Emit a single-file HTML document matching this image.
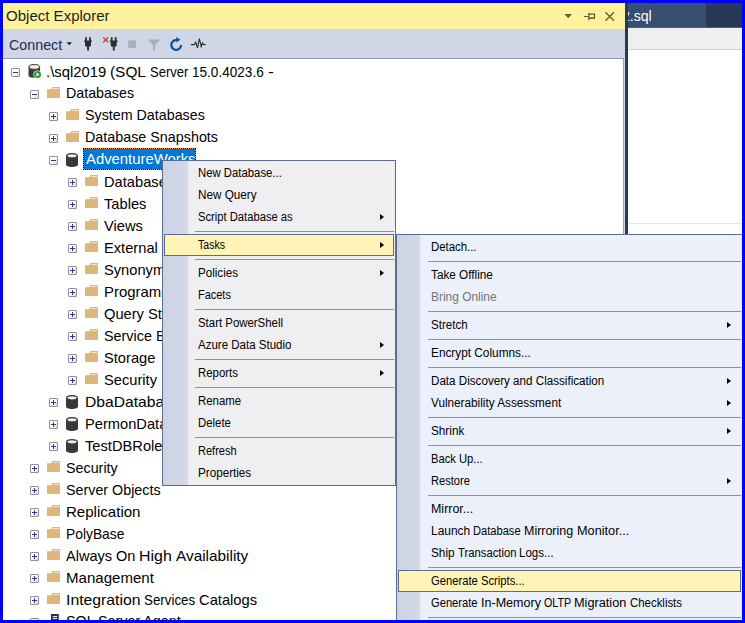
<!DOCTYPE html>
<html><head><meta charset="utf-8"><title>Object Explorer</title>
<style>
html,body{margin:0;padding:0}
body{width:745px;height:623px;position:relative;overflow:hidden;background:#fff;font-family:"Liberation Sans", sans-serif;}
#frame{position:absolute;left:0;top:0;width:739px;height:617px;border:3px solid #0000fe;z-index:50;pointer-events:none}
.abs{position:absolute}
.t{display:inline-block;transform-origin:0 50%;white-space:nowrap}
.tt{position:absolute;white-space:nowrap;line-height:22px;height:22px;font-size:15px;color:#000}
.ic{position:absolute;display:block}
.ex{position:absolute;width:7px;height:7px;border:1px solid #919191;background:linear-gradient(135deg,#fff 40%,#dcdcdc);border-radius:1px}
.ex .h{position:absolute;left:1px;top:3px;width:5px;height:1px;background:#27379a}
.ex .v{position:absolute;left:3px;top:1px;width:1px;height:5px;background:#27379a}
.menu{position:absolute;box-sizing:border-box;border:1px solid #5d6b8c;font-size:12px;color:#000}
.menu .gut{position:absolute;left:0;top:0;bottom:0;background:linear-gradient(90deg,#ccd3e4,#d3d9e8)}
.mi{position:absolute;left:0;right:0;height:22px;line-height:21.5px;white-space:nowrap}
.mi .t{position:absolute;top:1px}
.hl{position:absolute;box-sizing:border-box;top:0.2px;height:21.4px;border:1px solid #5a6a90;background:#fff3b5}
.sep{position:absolute;height:1px;background:#8490ad}
.arr{position:absolute;width:0;height:0;border-left:4.6px solid #000;border-top:3.8px solid transparent;border-bottom:3.8px solid transparent;top:7.8px}
.dis{color:#747474}
</style></head><body>

<div class="abs" style="left:3px;top:3px;width:621.5px;height:26px;background:#fff29d"></div>
<div class="tt" style="left:5.5px;top:5.2px;font-size:15.5px;color:#1e1e1e"><span class="t" id="title" style="transform:scaleX(0.9698)">Object Explorer</span></div>
<svg class="abs" style="left:560px;top:8px" width="62" height="16" viewBox="0 0 62 16">
<path d="M4.5 6h7.4l-3.7 4.2z" fill="#6a5a30"/>
<g stroke="#6a5a30" stroke-width="1.2" fill="none"><path d="M24 8.5h4.8M28.8 4.8v7.4M28.8 6.1h5.7v3.6"/></g><rect x="28.8" y="9.2" width="6.3" height="1.6" fill="#6a5a30"/>
<g stroke="#6a5a30" stroke-width="1.4" fill="none"><path d="M45.5 4.3l8.4 8.4M53.9 4.3l-8.4 8.4"/></g>
</svg>
<div class="abs" style="left:3px;top:29px;width:621.5px;height:29px;background:#cfd6e5"></div>
<div class="tt" style="left:8.5px;top:33.6px;color:#1b2a57"><span class="t" id="connect" style="transform:scaleX(0.9521)">Connect</span></div>
<svg class="abs" style="left:60px;top:32px" width="150" height="24" viewBox="0 0 150 24">
<path d="M6.6 10.2h5.4l-2.7 3z" fill="#1e1e1e"/>
<g fill="#2d2d2d"><rect x="25.1" y="5.2" width="1.8" height="4"/><rect x="29.1" y="5.2" width="1.8" height="4"/><path d="M24 8.5h8v1.2h-1v4l-1.2 1h-3.6l-1.2-1v-4h-1z"/><rect x="27.1" y="14.5" width="1.9" height="4"/></g>
<g fill="#2d2d2d" transform="translate(25.7,0)"><rect x="25.1" y="5.2" width="1.8" height="4"/><rect x="29.1" y="5.2" width="1.8" height="4"/><path d="M24 8.5h8v1.2h-1v4l-1.2 1h-3.6l-1.2-1v-4h-1z"/><rect x="27.1" y="14.5" width="1.9" height="4"/></g>
<path d="M43.2 5.4l5 5M48.2 5.4l-5 5" stroke="#c8321e" stroke-width="1.3" fill="none"/>
<rect x="68.2" y="8.3" width="7.8" height="7.6" fill="#a9aebb"/>
<path d="M87.8 7.4h12.4l-5 5.6v5.3h-2.3v-5.3z" fill="#a9aebb"/>
<path d="M116.6 8.1a4.9 4.9 0 1 0 4.5 4.9" stroke="#00539c" stroke-width="2.2" fill="none"/><path d="M116.2 5l4.3 2.7-4.3 2.5z" fill="#00539c"/>
<path d="M131 12.6h3.4l1.3-2.4 1.8 5.8 1.9-9.4 1.8 8 1.2-3.6 1.2 1.6h2" stroke="#2d2d2d" stroke-width="1.1" fill="none"/>
</svg>
<div class="abs" style="left:3px;top:58px;width:621px;height:1px;background:#8e9bbc"></div>
<div class="abs" style="left:623px;top:58px;width:1px;height:565px;background:#9aa3b8"></div>
<div class="abs" style="left:624px;top:29px;width:0.5px;height:594px;background:#cfd6e5"></div>
<div class="abs" style="left:624.5px;top:3px;width:3.5px;height:620px;background:#293955"></div>
<div class="abs" style="left:628px;top:3px;width:117px;height:25px;background:#293955"></div>
<div class="abs" style="left:628px;top:3px;width:78px;height:24px;background:#364e6f;overflow:hidden"><div class="tt" style="left:-5.8px;top:1.7px;color:#fff"><span class="t" id="tab" style="transform:scaleX(0.9389)">2.sql</span></div></div>
<div class="abs" style="left:628px;top:26.5px;width:117px;height:1.7px;background:#4d6082"></div>
<div class="abs" style="left:628px;top:28.2px;width:117px;height:21px;background:#efeff0"></div>
<div class="abs" style="left:628px;top:49px;width:117px;height:1px;background:#d0d0d6"></div>
<div class="abs" style="left:629px;top:222.5px;width:113px;height:1px;background:#e4e4ec"></div>
<div class="ex" style="left:11px;top:67.5px"><i class="h"></i></div>
<div class="abs" style="left:28px;top:63.5px"><svg class="ic" width="15" height="15" viewBox="0 0 15 15"><path d="M0.5 2.6v8.9c0 1.3 2.6 2.3 5.8 2.3s5.8-1 5.8-2.3v-8.9z" fill="#3a3a3a"/><ellipse cx="6.3" cy="2.9" rx="5.3" ry="2.4" fill="#ececec" stroke="#3a3a3a" stroke-width="1"/><circle cx="9.5" cy="10.5" r="4.1" fill="#fff"/><circle cx="9.5" cy="10.5" r="3.5" fill="#259a25"/><path d="M8.4 8.5l3.2 2-3.2 2z" fill="#fff"/></svg></div>
<div class="tt" style="left:0;top:61.0px"><span class="t" id="tr0_w0" style="white-space:pre;position:absolute;left:46.0px;transform:scaleX(0.9901)">.\sql2019 </span><span class="t" id="tr0_w1" style="white-space:pre;position:absolute;left:110.4px;transform:scaleX(1.0252)">(SQL </span><span class="t" id="tr0_w2" style="white-space:pre;position:absolute;left:150.0px;transform:scaleX(0.8685)">Server </span><span class="t" id="tr0_w3" style="white-space:pre;position:absolute;left:192.0px;transform:scaleX(0.9050)">15.0.4023.6 </span><span class="t" id="tr0_w4" style="white-space:pre;position:absolute;left:267.5px;transform:scaleX(1.1600)">-</span></div>
<div class="ex" style="left:30px;top:89.5px"><i class="h"></i></div>
<div class="abs" style="left:47px;top:86.8px"><svg class="ic" width="13" height="11" viewBox="0 0 13 11"><path d="M0 2.2h4.2l1.2-2.2h7.6v11h-13z" fill="#dcb67a"/><path d="M6.2 1h6v1.1h-6.4z" fill="#f3e4c8"/></svg></div>
<div class="tt" style="left:66.4px;top:82.3px"><span class="t" id="tr1" style="transform:scaleX(0.9481)">Databases</span></div>
<div class="ex" style="left:49px;top:111.5px"><i class="h"></i><i class="v"></i></div>
<div class="abs" style="left:66px;top:108.8px"><svg class="ic" width="13" height="11" viewBox="0 0 13 11"><path d="M0 2.2h4.2l1.2-2.2h7.6v11h-13z" fill="#dcb67a"/><path d="M6.2 1h6v1.1h-6.4z" fill="#f3e4c8"/></svg></div>
<div class="tt" style="left:85.2px;top:104.3px"><span class="t" id="tr2" style="transform:scaleX(0.9516)">System Databases</span></div>
<div class="ex" style="left:49px;top:133.5px"><i class="h"></i><i class="v"></i></div>
<div class="abs" style="left:66px;top:130.8px"><svg class="ic" width="13" height="11" viewBox="0 0 13 11"><path d="M0 2.2h4.2l1.2-2.2h7.6v11h-13z" fill="#dcb67a"/><path d="M6.2 1h6v1.1h-6.4z" fill="#f3e4c8"/></svg></div>
<div class="tt" style="left:85.2px;top:126.3px"><span class="t" id="tr3" style="transform:scaleX(0.9550)">Database Snapshots</span></div>
<div class="ex" style="left:49px;top:155.5px"><i class="h"></i></div>
<div class="abs" style="left:66px;top:152.5px"><svg class="ic" width="12" height="14" viewBox="0 0 12 14"><path d="M0 2.6v8.9c0 1.4 2.7 2.5 6 2.5s6-1.1 6-2.5v-8.9z" fill="#383838"/><ellipse cx="6" cy="2.8" rx="5.2" ry="2.2" fill="#ececec" stroke="#383838" stroke-width="1.1"/></svg></div>
<div class="abs" style="left:83px;top:148px;width:113px;height:21.5px;background:#0078d7;box-sizing:border-box;border:1px solid #ff8a2a"></div>
<div class="abs" style="left:83px;top:148px;width:113px;height:21.5px;box-sizing:border-box;border:1px dotted #000"></div>
<div class="tt" style="left:85.5px;top:148.0px;color:#fff"><span class="t" id="tr4" style="transform:scaleX(0.9898)">AdventureWorks</span></div>
<div class="ex" style="left:68px;top:177.5px"><i class="h"></i><i class="v"></i></div>
<div class="abs" style="left:85px;top:174.8px"><svg class="ic" width="13" height="11" viewBox="0 0 13 11"><path d="M0 2.2h4.2l1.2-2.2h7.6v11h-13z" fill="#dcb67a"/><path d="M6.2 1h6v1.1h-6.4z" fill="#f3e4c8"/></svg></div>
<div class="tt" style="left:104.2px;top:171.0px"><span class="t" id="tr5" style="transform:scaleX(0.9780)">Database Diagrams</span></div>
<div class="ex" style="left:68px;top:199.5px"><i class="h"></i><i class="v"></i></div>
<div class="abs" style="left:85px;top:196.8px"><svg class="ic" width="13" height="11" viewBox="0 0 13 11"><path d="M0 2.2h4.2l1.2-2.2h7.6v11h-13z" fill="#dcb67a"/><path d="M6.2 1h6v1.1h-6.4z" fill="#f3e4c8"/></svg></div>
<div class="tt" style="left:104.2px;top:193.0px"><span class="t" id="tr6" style="transform:scaleX(0.9780)">Tables</span></div>
<div class="ex" style="left:68px;top:221.5px"><i class="h"></i><i class="v"></i></div>
<div class="abs" style="left:85px;top:218.8px"><svg class="ic" width="13" height="11" viewBox="0 0 13 11"><path d="M0 2.2h4.2l1.2-2.2h7.6v11h-13z" fill="#dcb67a"/><path d="M6.2 1h6v1.1h-6.4z" fill="#f3e4c8"/></svg></div>
<div class="tt" style="left:104.2px;top:215.0px"><span class="t" id="tr7" style="transform:scaleX(0.9780)">Views</span></div>
<div class="ex" style="left:68px;top:243.5px"><i class="h"></i><i class="v"></i></div>
<div class="abs" style="left:85px;top:240.8px"><svg class="ic" width="13" height="11" viewBox="0 0 13 11"><path d="M0 2.2h4.2l1.2-2.2h7.6v11h-13z" fill="#dcb67a"/><path d="M6.2 1h6v1.1h-6.4z" fill="#f3e4c8"/></svg></div>
<div class="tt" style="left:104.2px;top:237.0px"><span class="t" id="tr8" style="transform:scaleX(0.9780)">External Resources</span></div>
<div class="ex" style="left:68px;top:265.5px"><i class="h"></i><i class="v"></i></div>
<div class="abs" style="left:85px;top:262.8px"><svg class="ic" width="13" height="11" viewBox="0 0 13 11"><path d="M0 2.2h4.2l1.2-2.2h7.6v11h-13z" fill="#dcb67a"/><path d="M6.2 1h6v1.1h-6.4z" fill="#f3e4c8"/></svg></div>
<div class="tt" style="left:104.2px;top:259.0px"><span class="t" id="tr9" style="transform:scaleX(0.9780)">Synonyms</span></div>
<div class="ex" style="left:68px;top:287.5px"><i class="h"></i><i class="v"></i></div>
<div class="abs" style="left:85px;top:284.8px"><svg class="ic" width="13" height="11" viewBox="0 0 13 11"><path d="M0 2.2h4.2l1.2-2.2h7.6v11h-13z" fill="#dcb67a"/><path d="M6.2 1h6v1.1h-6.4z" fill="#f3e4c8"/></svg></div>
<div class="tt" style="left:104.2px;top:281.0px"><span class="t" id="tr10" style="transform:scaleX(0.9927)">Programmability</span></div>
<div class="ex" style="left:68px;top:309.5px"><i class="h"></i><i class="v"></i></div>
<div class="abs" style="left:85px;top:306.8px"><svg class="ic" width="13" height="11" viewBox="0 0 13 11"><path d="M0 2.2h4.2l1.2-2.2h7.6v11h-13z" fill="#dcb67a"/><path d="M6.2 1h6v1.1h-6.4z" fill="#f3e4c8"/></svg></div>
<div class="tt" style="left:104.2px;top:303.0px"><span class="t" id="tr11" style="transform:scaleX(0.9780)">Query Store</span></div>
<div class="ex" style="left:68px;top:331.5px"><i class="h"></i><i class="v"></i></div>
<div class="abs" style="left:85px;top:328.8px"><svg class="ic" width="13" height="11" viewBox="0 0 13 11"><path d="M0 2.2h4.2l1.2-2.2h7.6v11h-13z" fill="#dcb67a"/><path d="M6.2 1h6v1.1h-6.4z" fill="#f3e4c8"/></svg></div>
<div class="tt" style="left:104.2px;top:325.0px"><span class="t" id="tr12" style="transform:scaleX(0.9585)">Service Broker</span></div>
<div class="ex" style="left:68px;top:353.5px"><i class="h"></i><i class="v"></i></div>
<div class="abs" style="left:85px;top:350.8px"><svg class="ic" width="13" height="11" viewBox="0 0 13 11"><path d="M0 2.2h4.2l1.2-2.2h7.6v11h-13z" fill="#dcb67a"/><path d="M6.2 1h6v1.1h-6.4z" fill="#f3e4c8"/></svg></div>
<div class="tt" style="left:104.2px;top:347.0px"><span class="t" id="tr13" style="transform:scaleX(0.9780)">Storage</span></div>
<div class="ex" style="left:68px;top:375.5px"><i class="h"></i><i class="v"></i></div>
<div class="abs" style="left:85px;top:372.8px"><svg class="ic" width="13" height="11" viewBox="0 0 13 11"><path d="M0 2.2h4.2l1.2-2.2h7.6v11h-13z" fill="#dcb67a"/><path d="M6.2 1h6v1.1h-6.4z" fill="#f3e4c8"/></svg></div>
<div class="tt" style="left:104.2px;top:369.0px"><span class="t" id="tr14" style="transform:scaleX(0.9780)">Security</span></div>
<div class="ex" style="left:49px;top:397.5px"><i class="h"></i><i class="v"></i></div>
<div class="abs" style="left:66px;top:394.5px"><svg class="ic" width="12" height="14" viewBox="0 0 12 14"><path d="M0 2.6v8.9c0 1.4 2.7 2.5 6 2.5s6-1.1 6-2.5v-8.9z" fill="#383838"/><ellipse cx="6" cy="2.8" rx="5.2" ry="2.2" fill="#ececec" stroke="#383838" stroke-width="1.1"/></svg></div>
<div class="tt" style="left:85.2px;top:391.0px"><span class="t" id="tr15" style="transform:scaleX(1.0445)">DbaDatabase</span></div>
<div class="ex" style="left:49px;top:419.5px"><i class="h"></i><i class="v"></i></div>
<div class="abs" style="left:66px;top:416.5px"><svg class="ic" width="12" height="14" viewBox="0 0 12 14"><path d="M0 2.6v8.9c0 1.4 2.7 2.5 6 2.5s6-1.1 6-2.5v-8.9z" fill="#383838"/><ellipse cx="6" cy="2.8" rx="5.2" ry="2.2" fill="#ececec" stroke="#383838" stroke-width="1.1"/></svg></div>
<div class="tt" style="left:85.2px;top:413.0px"><span class="t" id="tr16" style="transform:scaleX(0.9780)">PermonDatabase</span></div>
<div class="ex" style="left:49px;top:441.5px"><i class="h"></i><i class="v"></i></div>
<div class="abs" style="left:66px;top:438.5px"><svg class="ic" width="12" height="14" viewBox="0 0 12 14"><path d="M0 2.6v8.9c0 1.4 2.7 2.5 6 2.5s6-1.1 6-2.5v-8.9z" fill="#383838"/><ellipse cx="6" cy="2.8" rx="5.2" ry="2.2" fill="#ececec" stroke="#383838" stroke-width="1.1"/></svg></div>
<div class="tt" style="left:85.2px;top:435.0px"><span class="t" id="tr17" style="transform:scaleX(0.9780)">TestDBRoles</span></div>
<div class="ex" style="left:30px;top:463.5px"><i class="h"></i><i class="v"></i></div>
<div class="abs" style="left:47px;top:460.8px"><svg class="ic" width="13" height="11" viewBox="0 0 13 11"><path d="M0 2.2h4.2l1.2-2.2h7.6v11h-13z" fill="#dcb67a"/><path d="M6.2 1h6v1.1h-6.4z" fill="#f3e4c8"/></svg></div>
<div class="tt" style="left:66.4px;top:457.0px"><span class="t" id="tr18" style="transform:scaleX(0.9541)">Security</span></div>
<div class="ex" style="left:30px;top:485.5px"><i class="h"></i><i class="v"></i></div>
<div class="abs" style="left:47px;top:482.8px"><svg class="ic" width="13" height="11" viewBox="0 0 13 11"><path d="M0 2.2h4.2l1.2-2.2h7.6v11h-13z" fill="#dcb67a"/><path d="M6.2 1h6v1.1h-6.4z" fill="#f3e4c8"/></svg></div>
<div class="tt" style="left:66.4px;top:479.0px"><span class="t" id="tr19" style="transform:scaleX(0.9536)">Server Objects</span></div>
<div class="ex" style="left:30px;top:507.5px"><i class="h"></i><i class="v"></i></div>
<div class="abs" style="left:47px;top:504.8px"><svg class="ic" width="13" height="11" viewBox="0 0 13 11"><path d="M0 2.2h4.2l1.2-2.2h7.6v11h-13z" fill="#dcb67a"/><path d="M6.2 1h6v1.1h-6.4z" fill="#f3e4c8"/></svg></div>
<div class="tt" style="left:66.4px;top:501.0px"><span class="t" id="tr20" style="transform:scaleX(1.0038)">Replication</span></div>
<div class="ex" style="left:30px;top:529.5px"><i class="h"></i><i class="v"></i></div>
<div class="abs" style="left:47px;top:526.8px"><svg class="ic" width="13" height="11" viewBox="0 0 13 11"><path d="M0 2.2h4.2l1.2-2.2h7.6v11h-13z" fill="#dcb67a"/><path d="M6.2 1h6v1.1h-6.4z" fill="#f3e4c8"/></svg></div>
<div class="tt" style="left:66.4px;top:523.0px"><span class="t" id="tr21" style="transform:scaleX(0.9215)">PolyBase</span></div>
<div class="ex" style="left:30px;top:551.5px"><i class="h"></i><i class="v"></i></div>
<div class="abs" style="left:47px;top:548.8px"><svg class="ic" width="13" height="11" viewBox="0 0 13 11"><path d="M0 2.2h4.2l1.2-2.2h7.6v11h-13z" fill="#dcb67a"/><path d="M6.2 1h6v1.1h-6.4z" fill="#f3e4c8"/></svg></div>
<div class="tt" style="left:0;top:545.0px"><span class="t" id="tr22_w0" style="white-space:pre;position:absolute;left:65.5px;transform:scaleX(0.9693)">Always </span><span class="t" id="tr22_w1" style="white-space:pre;position:absolute;left:115.6px;transform:scaleX(0.9674)">On </span><span class="t" id="tr22_w2" style="white-space:pre;position:absolute;left:139.0px;transform:scaleX(1.0619)">High </span><span class="t" id="tr22_w3" style="white-space:pre;position:absolute;left:176.2px;transform:scaleX(1.0242)">Availability</span></div>
<div class="ex" style="left:30px;top:573.5px"><i class="h"></i><i class="v"></i></div>
<div class="abs" style="left:47px;top:570.8px"><svg class="ic" width="13" height="11" viewBox="0 0 13 11"><path d="M0 2.2h4.2l1.2-2.2h7.6v11h-13z" fill="#dcb67a"/><path d="M6.2 1h6v1.1h-6.4z" fill="#f3e4c8"/></svg></div>
<div class="tt" style="left:66.4px;top:567.0px"><span class="t" id="tr23" style="transform:scaleX(1.0039)">Management</span></div>
<div class="ex" style="left:30px;top:595.5px"><i class="h"></i><i class="v"></i></div>
<div class="abs" style="left:47px;top:592.8px"><svg class="ic" width="13" height="11" viewBox="0 0 13 11"><path d="M0 2.2h4.2l1.2-2.2h7.6v11h-13z" fill="#dcb67a"/><path d="M6.2 1h6v1.1h-6.4z" fill="#f3e4c8"/></svg></div>
<div class="tt" style="left:0;top:589.0px"><span class="t" id="tr24_w0" style="white-space:pre;position:absolute;left:65.5px;transform:scaleX(1.0511)">Integration </span><span class="t" id="tr24_w1" style="white-space:pre;position:absolute;left:144.4px;transform:scaleX(0.8900)">Services </span><span class="t" id="tr24_w2" style="white-space:pre;position:absolute;left:199.3px;transform:scaleX(0.9814)">Catalogs</span></div>
<div class="ex" style="left:30px;top:617.5px"><i class="h"></i><i class="v"></i></div>
<div class="abs" style="left:50px;top:614.0px"><svg class="ic" width="10" height="14" viewBox="0 0 10 14"><rect x="1" y="0" width="7.8" height="10" fill="#333"/><rect x="2.8" y="2" width="4.4" height="1.1" fill="#e4e4e4"/><rect x="2.8" y="3.9" width="4.4" height="1.1" fill="#e4e4e4"/><rect x="4" y="10" width="2" height="2" fill="#333"/><rect x="0" y="12" width="10" height="1.5" fill="#333"/></svg></div>
<div class="tt" style="left:66.4px;top:610.3px"><span class="t" id="tr25" style="transform:scaleX(0.9530)">SQL Server Agent</span></div>
<div class="menu" style="left:162px;top:160px;width:234px;height:325.5px;background:#efeff1"><div class="gut" style="width:24.5px"></div><div class="mi" style="top:1.0px"><span class="t" id="m1_0" style="left:35.0px;transform:scaleX(0.9446)">New Database...</span></div><div class="mi" style="top:23.0px"><span class="t" id="m1_1" style="left:35.0px;transform:scaleX(0.9762)">New Query</span></div><div class="mi" style="top:45.0px"><span class="t" id="m1_2" style="left:35.0px;transform:scaleX(0.9340)">Script Database as</span><div class="arr" style="left:217.3px"></div></div><div class="sep" style="left:31.8px;width:198.8px;top:70.0px"></div><div class="mi" style="top:73.0px"><div class="hl" style="left:1.2px;width:229.4px"></div><span class="t" id="m1_4" style="left:35.0px;transform:scaleX(0.8798)">Tasks</span><div class="arr" style="left:217.3px"></div></div><div class="sep" style="left:31.8px;width:198.8px;top:98.0px"></div><div class="mi" style="top:101.0px"><span class="t" id="m1_6" style="left:35.0px;transform:scaleX(0.9671)">Policies</span><div class="arr" style="left:217.3px"></div></div><div class="mi" style="top:123.0px"><span class="t" id="m1_7" style="left:35.0px;transform:scaleX(0.9135)">Facets</span></div><div class="sep" style="left:31.8px;width:198.8px;top:148.0px"></div><div class="mi" style="top:151.0px"><span class="t" id="m1_9" style="left:35.0px;transform:scaleX(0.9510)">Start PowerShell</span></div><div class="mi" style="top:173.0px"><span class="t" id="m1_10" style="left:35.0px;transform:scaleX(0.9590)">Azure Data Studio</span><div class="arr" style="left:217.3px"></div></div><div class="sep" style="left:31.8px;width:198.8px;top:198.0px"></div><div class="mi" style="top:201.0px"><span class="t" id="m1_12" style="left:35.0px;transform:scaleX(0.9517)">Reports</span><div class="arr" style="left:217.3px"></div></div><div class="sep" style="left:31.8px;width:198.8px;top:226.0px"></div><div class="mi" style="top:229.0px"><span class="t" id="m1_14" style="left:35.0px;transform:scaleX(0.9524)">Rename</span></div><div class="mi" style="top:251.0px"><span class="t" id="m1_15" style="left:35.0px;transform:scaleX(0.9485)">Delete</span></div><div class="sep" style="left:31.8px;width:198.8px;top:276.0px"></div><div class="mi" style="top:279.0px"><span class="t" id="m1_17" style="left:35.0px;transform:scaleX(0.9207)">Refresh</span></div><div class="mi" style="top:301.0px"><span class="t" id="m1_18" style="left:35.0px;transform:scaleX(0.9725)">Properties</span></div></div>
<div class="menu" style="left:396px;top:234.3px;width:352px;height:400px;background:#ecf0fa"><div class="gut" style="width:22.5px"></div><div class="mi" style="top:0.7px"><span class="t" id="m2_0" style="left:34.2px;transform:scaleX(0.9473)">Detach...</span></div><div class="sep" style="left:30.9px;width:313.1px;top:25.7px"></div><div class="mi" style="top:28.7px"><span class="t" id="m2_2" style="left:34.2px;transform:scaleX(0.9801)">Take Offline</span></div><div class="mi" style="top:50.7px"><span class="t dis" id="m2_3" style="left:34.2px;transform:scaleX(0.9932)">Bring Online</span></div><div class="sep" style="left:30.9px;width:313.1px;top:75.7px"></div><div class="mi" style="top:78.7px"><span class="t" id="m2_5" style="left:34.2px;transform:scaleX(0.9628)">Stretch</span><div class="arr" style="left:330.0px"></div></div><div class="sep" style="left:30.9px;width:313.1px;top:103.7px"></div><div class="mi" style="top:106.7px"><span class="t" id="m2_7" style="left:34.2px;transform:scaleX(0.9845)">Encrypt Columns...</span></div><div class="sep" style="left:30.9px;width:313.1px;top:131.7px"></div><div class="mi" style="top:134.7px"><span class="t" id="m2_9" style="left:34.2px;transform:scaleX(0.9695)">Data Discovery and Classification</span><div class="arr" style="left:330.0px"></div></div><div class="mi" style="top:156.7px"><span class="t" id="m2_10" style="left:34.2px;transform:scaleX(0.9793)">Vulnerability Assessment</span><div class="arr" style="left:330.0px"></div></div><div class="sep" style="left:30.9px;width:313.1px;top:181.7px"></div><div class="mi" style="top:184.7px"><span class="t" id="m2_12" style="left:34.2px;transform:scaleX(0.9790)">Shrink</span><div class="arr" style="left:330.0px"></div></div><div class="sep" style="left:30.9px;width:313.1px;top:209.7px"></div><div class="mi" style="top:212.7px"><span class="t" id="m2_14" style="left:34.2px;transform:scaleX(0.9321)">Back Up...</span></div><div class="mi" style="top:234.7px"><span class="t" id="m2_15" style="left:34.2px;transform:scaleX(0.9255)">Restore</span><div class="arr" style="left:330.0px"></div></div><div class="sep" style="left:30.9px;width:313.1px;top:259.7px"></div><div class="mi" style="top:262.7px"><span class="t" id="m2_17" style="left:34.2px;transform:scaleX(1.0376)">Mirror...</span></div><div class="mi" style="top:284.7px"><span class="t" id="m2_18_w0" style="white-space:pre;position:absolute;left:33.8px;transform:scaleX(0.9929)">Launch </span><span class="t" id="m2_18_w1" style="white-space:pre;position:absolute;left:76.2px;transform:scaleX(0.9268)">Database </span><span class="t" id="m2_18_w2" style="white-space:pre;position:absolute;left:126.9px;transform:scaleX(1.0381)">Mirroring </span><span class="t" id="m2_18_w3" style="white-space:pre;position:absolute;left:179.5px;transform:scaleX(1.0596)">Monitor...</span></div><div class="mi" style="top:306.7px"><span class="t" id="m2_19_w0" style="white-space:pre;position:absolute;left:33.8px;transform:scaleX(0.9796)">Ship </span><span class="t" id="m2_19_w1" style="white-space:pre;position:absolute;left:60.6px;transform:scaleX(0.9391)">Transaction </span><span class="t" id="m2_19_w2" style="white-space:pre;position:absolute;left:122.2px;transform:scaleX(0.9603)">Logs...</span></div><div class="sep" style="left:30.9px;width:313.1px;top:331.7px"></div><div class="mi" style="top:334.7px"><div class="hl" style="left:0.5px;width:343.2px"></div><span class="t" id="m2_21" style="left:34.2px;transform:scaleX(0.9366)">Generate Scripts...</span></div><div class="mi" style="top:356.7px"><span class="t" id="m2_22_w0" style="white-space:pre;position:absolute;left:33.8px;transform:scaleX(0.9311)">Generate </span><span class="t" id="m2_22_w1" style="white-space:pre;position:absolute;left:83.5px;transform:scaleX(1.0447)">In-Memory </span><span class="t" id="m2_22_w2" style="white-space:pre;position:absolute;left:146.9px;transform:scaleX(0.8934)">OLTP </span><span class="t" id="m2_22_w3" style="white-space:pre;position:absolute;left:176.9px;transform:scaleX(1.0591)">Migration </span><span class="t" id="m2_22_w4" style="white-space:pre;position:absolute;left:232.7px;transform:scaleX(0.9509)">Checklists</span></div><div class="sep" style="left:30.9px;width:313.1px;top:381.7px"></div></div>
<div id="frame"></div>
</body></html>
